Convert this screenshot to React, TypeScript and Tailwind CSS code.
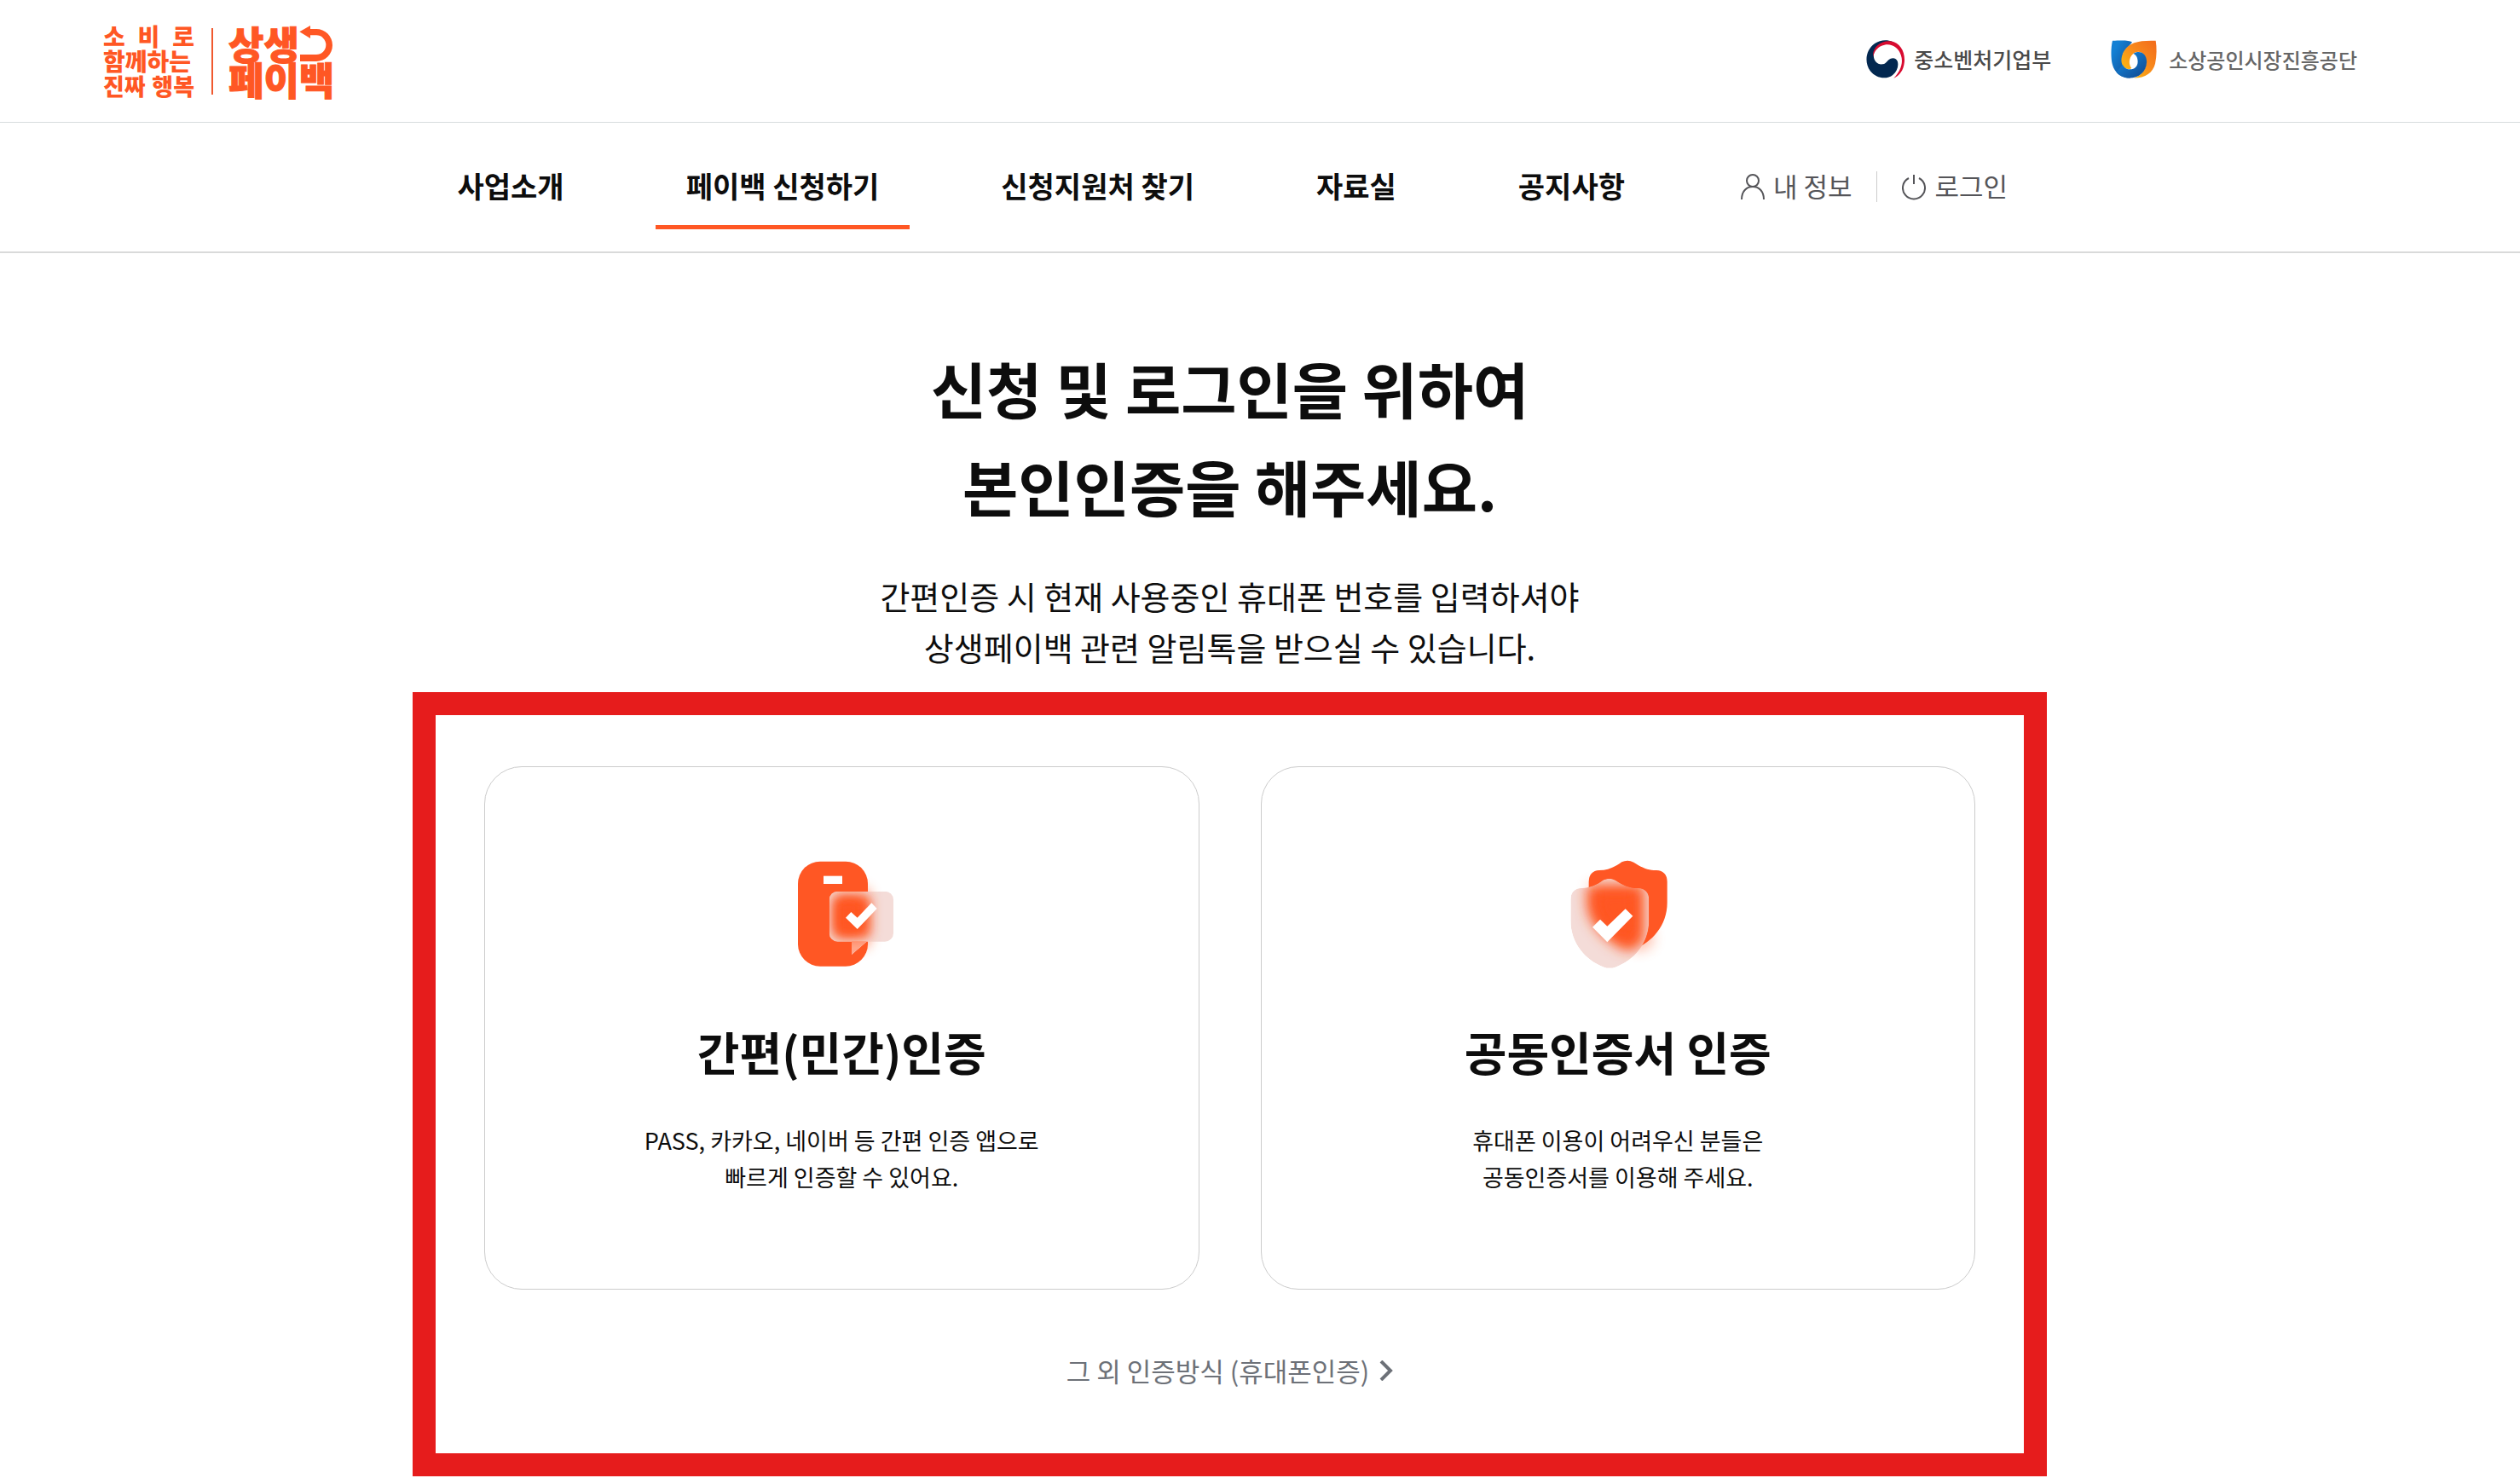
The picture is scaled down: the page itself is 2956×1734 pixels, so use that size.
import React from "react"

interface TMenuItem {
  label: string
  href: string
  active?: boolean
}

const menu: TMenuItem[] = [
  { label: "사업소개", href: "#about" },
  { label: "페이백 신청하기", href: "#apply", active: true },
  { label: "신청지원처 찾기", href: "#support" },
  { label: "자료실", href: "#archive" },
  { label: "공지사항", href: "#notice" },
]

const ReturnArrow: React.FC = () => (
  <svg className="h-[42px] w-[39px]" viewBox="0 0 117 126" aria-hidden="true">
    <path d="M1 22 L39 0 V12 H60 A57 57 0 0 1 60 126 H3 V102 H60 A33 33 0 0 0 60 34 H39 V45 Z" fill="#ff5724" />
  </svg>
)

const GovMark: React.FC = () => (
  <svg className="h-[45px] w-[46px]" viewBox="26 25 137 135" aria-hidden="true">
    <path
      d="M140 48 C120 22 82 19 56 37 C24 59 18 104 40 134 C60 160 98 166 120 147 C134 135 141 117 136 100 C133 90 122 86 112 90 C100 94 98 108 84 110 C66 113 51 98 52 78 C54 50 80 34 106 35 C122 36 134 42 140 48Z"
      fill="#032850"
    />
    <path
      d="M50 84 C46 50 78 25 112 29 C146 34 164 68 160 104 C157 132 143 150 122 160 C145 137 158 106 148 78 C140 52 116 36 90 42 C68 47 54 62 50 84Z"
      fill="#d80b30"
    />
  </svg>
)

const SemasMark: React.FC = () => (
  <svg className="h-[45px] w-[54px]" viewBox="18 25 164 134" aria-hidden="true">
    <defs>
      <linearGradient id="semasBlue" x1="0" y1="0" x2="1" y2="1">
        <stop offset="0.2" stopColor="#1380d4" />
        <stop offset="1" stopColor="#12468c" />
      </linearGradient>
      <linearGradient id="semasOrange" x1="1" y1="0" x2="0" y2="1">
        <stop offset="0" stopColor="#f26a1b" />
        <stop offset="0.45" stopColor="#f88a1c" />
        <stop offset="1" stopColor="#fdc70c" />
      </linearGradient>
    </defs>
    <path
      d="M94 31 C84 25 64 24 24 26 C18 50 18 90 24 112 C32 142 56 159 88 159 L62 120 L62 70Z"
      fill="url(#semasBlue)"
    />
    <path
      d="M178 26 C118 24 84 32 66 62 C48 92 54 126 84 128 L92 124 C82 112 80 88 98 72 C118 58 140 68 144 98 C145 128 128 150 100 159 C142 159 168 140 176 108 C182 80 182 50 178 26Z"
      fill="url(#semasOrange)"
    />
    <path
      d="M98 72 C122 58 146 72 146 102 C144 138 118 159 84 159 C62 158 48 150 38 138 L60 112 C66 124 76 129 86 128 C104 128 114 116 114 100 C114 86 108 76 98 72Z"
      fill="url(#semasBlue)"
    />
  </svg>
)

const PhoneIcon: React.FC = () => (
  <svg className="size-[180px]" viewBox="-6 0 540 540" aria-hidden="true">
    <defs>
      <filter id="phoneBlur" x="-50%" y="-50%" width="200%" height="200%">
        <feGaussianBlur stdDeviation="20" />
      </filter>
      <clipPath id="bubble">
        <rect x="221" y="197" width="226" height="177" rx="30" />
        <path d="M300 373 H354 L300 420Z" />
      </clipPath>
    </defs>
    <rect x="240" y="180" width="130" height="220" rx="40" fill="#ff5724" opacity="0.5" filter="url(#phoneBlur)" />
    <rect x="111" y="92" width="246" height="369" rx="78" fill="#ff5724" />
    <rect x="201" y="143" width="66" height="28" fill="#fff" />
    <g clipPath="url(#bubble)">
      <rect x="221" y="197" width="226" height="230" fill="#f4dcd8" />
      <path d="M300 373 H354 L300 420Z" fill="#ffa78c" />
      <rect x="234" y="210" width="132" height="150" rx="20" fill="#ff5724" filter="url(#phoneBlur)" />
      <rect x="246" y="226" width="90" height="120" rx="20" fill="#ff5724" filter="url(#phoneBlur)" />
    </g>
    <path d="M279 290 L298 270 L320 290 L370 238 L389 258 L320 330Z" fill="#fff" />
  </svg>
)

const shield =
  "M213 157 Q234 147 255 158 C280 174 300 186 335 186 Q372 188 373 226 V300 C373 380 320 440 255 464 Q234 471 214 464 C150 440 97 380 97 300 V226 Q98 188 134 186 C165 186 190 174 213 157Z"

const ShieldIcon: React.FC = () => (
  <svg className="size-[180px]" viewBox="-6 0 540 540" aria-hidden="true">
    <defs>
      <filter id="shieldBlur" x="-50%" y="-50%" width="200%" height="200%">
        <feGaussianBlur stdDeviation="22" />
      </filter>
      <clipPath id="frontShield">
        <path d={shield} />
      </clipPath>
    </defs>
    <path d="M160 170 H340 L390 380 L340 410 L180 330Z" fill="#ff5724" opacity="0.4" filter="url(#shieldBlur)" />
    <path d={shield} transform="translate(64 -63)" fill="#ff5724" />
    <g clipPath="url(#frontShield)">
      <path d={shield} fill="#f4dcd8" />
      <path
        d="M155 176 H355 V370 Q320 414 290 404 C220 374 155 304 155 240Z"
        fill="#ff5724"
        filter="url(#shieldBlur)"
      />
      <path d="M190 200 H320 V340 L290 370 C240 340 200 300 190 240Z" fill="#ff5724" filter="url(#shieldBlur)" />
    </g>
    <path d="M174 323 L201 296 L226 320 L290 259 L316 284 L226 376Z" fill="#fff" />
  </svg>
)

interface TAuthCard {
  icon: React.ReactNode
  title: string
  lines: string[]
}
const AuthCard: React.FC<TAuthCard> = ({ icon, title, lines }) => {
  return (
    <button
      type="button"
      className="flex flex-1 cursor-pointer flex-col items-center rounded-[44px] border border-[#cccccc] bg-white pt-20 pb-[110px]"
    >
      {icon}
      <strong className="mt-9 text-[54px] leading-[76px] font-bold">{title}</strong>
      <span className="mt-11 text-[27px] leading-[43px]">
        {lines.map((line) => (
          <span key={line} className="block">{line}</span>
        ))}
      </span>
    </button>
  )
}

const App: React.FC = () => {
  return (
    <div className="bg-white font-['Noto_Sans_CJK_KR',sans-serif] text-[#0d0d0d]">
      <header>
        <div className="flex items-center justify-between border-b border-[#d8dcde] pt-7 pr-[191px] pb-7 pl-[121px]">
          <a href="#home" className="flex items-center text-[#ff5724]">
            <span className="w-[107px] text-[28px] leading-[29px] font-black">
              <span className="flex justify-between">
                <span>소</span> <span>비</span> <span>로</span>
              </span>
              <span className="block">함께하는</span>
              <span className="flex justify-between text-[27px]">
                <span>진짜</span> <span>행복</span>
              </span>
            </span>
            <span className="mr-[18px] ml-5 h-[78px] w-[2px] bg-[#f0592f]" />
            <span className="text-[45px] leading-[42px] font-black [-webkit-text-stroke:1px_#ff5724]">
              <span className="flex items-center">
                상생
                <ReturnArrow />
              </span>
              <span className="block">페이백</span>
            </span>
          </a>
          <div className="flex items-center gap-[70px] pb-1 font-medium">
            <a href="#mss" className="flex items-center gap-[10px] text-[25px] text-[#4a4a4a]">
              <GovMark />
              중소벤처기업부
            </a>
            <a href="#semas" className="flex items-center gap-[14px] text-[24px] text-[#666666]">
              <SemasMark />
              소상공인시장진흥공단
            </a>
          </div>
        </div>
        <nav className="border-b-2 border-[#d9dada] pr-[71px]">
          <div className="mx-auto flex h-[151px] max-w-[1884px] items-center">
            <ul className="flex gap-[71px]">
              {menu.map((item) => (
                <li key={item.label}>
                  <a
                    href={item.href}
                    className={
                      "flex h-[98px] items-center border-y-[5px] border-t-transparent px-9 pb-1 text-[34px] font-bold " +
                      (item.active ? "border-b-[#ff5724]" : "border-b-transparent")
                    }
                  >
                    {item.label}
                  </a>
                </li>
              ))}
            </ul>
            <div className="ml-[100px] flex items-center pb-0.5 text-[31px] text-[#555559]">
              <a href="#me" className="flex items-center gap-[10px]">
                <svg className="h-8 w-7" viewBox="0 0 28 32" fill="none" stroke="currentColor" strokeWidth="2" aria-hidden="true">
                  <circle cx="14" cy="9" r="7" />
                  <path d="M1 31 C1 21 7 16 14 16 S27 21 27 31" />
                </svg>
                내 정보
              </a>
              <span className="mx-[29px] h-9 w-px bg-[#cccccc]" />
              <a href="#login" className="flex items-center gap-[10px]">
                <svg className="h-8 w-7" viewBox="0 0 28 32" fill="none" stroke="currentColor" strokeWidth="2" aria-hidden="true">
                  <path d="M8 6 A13 13 0 1 0 20 6 M14 2 V13" />
                </svg>
                로그인
              </a>
            </div>
          </div>
        </nav>
      </header>
      <main className="flex flex-col items-center pt-[100px] pr-[71px] text-center">
        <h1 className="text-[71px] leading-[115px] font-bold">
          신청 및 로그인을 위하여
          <br />
          본인인증을 해주세요.
        </h1>
        <p className="mt-[42px] text-[38px] leading-[60px]">
          간편인증 시 현재 사용중인 휴대폰 번호를 입력하셔야
          <br />
          상생페이백 관련 알림톡을 받으실 수 있습니다.
        </p>
        <section className="mt-[23px] w-full max-w-[1917px] border-[27px] border-[#e61c1c] px-[57px] pt-[60px] pb-[72px]">
          <div className="flex gap-[72px]">
            <AuthCard
              icon={<PhoneIcon />}
              title="간편(민간)인증"
              lines={["PASS, 카카오, 네이버 등 간편 인증 앱으로", "빠르게 인증할 수 있어요."]}
            />
            <AuthCard
              icon={<ShieldIcon />}
              title="공동인증서 인증"
              lines={["휴대폰 이용이 어려우신 분들은", "공동인증서를 이용해 주세요."]}
            />
          </div>
          <a href="#other" className="mt-[70px] flex items-center justify-center gap-3 text-[31px] leading-[50px] text-[#6d7178]">
            그 외 인증방식 (휴대폰인증)
            <svg className="h-6 w-4" viewBox="0 0 16 24" fill="none" stroke="currentColor" strokeWidth="4" aria-hidden="true">
              <path d="M2 1 L13 12 L2 23" />
            </svg>
          </a>
        </section>
      </main>
    </div>
  )
}
export default App
